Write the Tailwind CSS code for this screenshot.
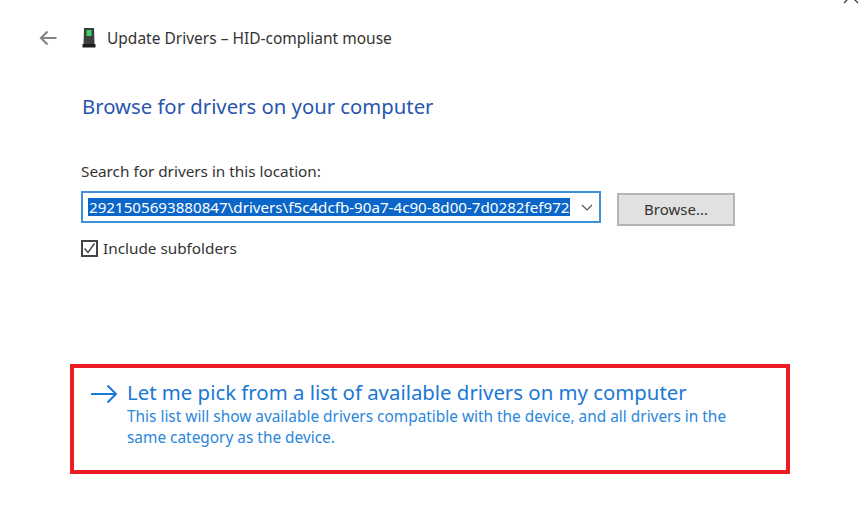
<!DOCTYPE html>
<html>
<head>
<meta charset="utf-8">
<script src="https://cdn.jsdelivr.net/npm/@tailwindcss/browser@4"></script>
</head>
<body class="bg-white">
<div class="relative w-[866px] h-[519px] overflow-hidden bg-white font-['Noto_Sans',sans-serif] antialiased">
  <svg class="absolute left-[843px] top-[-12px] w-[16px] h-[16px]" viewBox="0 0 16 16" fill="none" stroke="#333" stroke-width="1.2"><path d="M1 1l14 14M15 1L1 15"/></svg>

  <div class="flex items-center h-[24px] mt-[26px] ml-[39px]">
    <svg class="w-[18px] h-[16px] text-[#858585]" viewBox="0 0 18 16" fill="none" stroke="currentColor" stroke-width="2.2"><path d="M17.500 8H2M8.500 1.500 2 8l6.500 6.500"/></svg>
    <svg class="w-[14px] h-[20px] ml-[25px]" viewBox="0 0 14 20"><path d="M2 0h10l.5 16h-11z" fill="#3a3f3e"/><rect x="4.500" y="2" width="5" height="6" fill="#3fd06a"/><rect x="0.500" y="16" width="13" height="3.500" fill="#1d1f1f"/></svg>
    <span class="ml-[11px] text-[15.5px] leading-[24px] text-[#333]">Update Drivers – HID-compliant mouse</span>
  </div>

  <h1 class="ml-[82px] mt-[42px] text-[20.3px] leading-[28px] font-normal text-[#2a56ad]">Browse for drivers on your computer</h1>

  <p class="ml-[81px] mt-[41px] text-[15.3px] leading-[20px] text-[#333]">Search for drivers in this location:</p>

  <div class="flex items-start ml-[81px] mt-[10px]">
    <div class="flex items-center w-[520px] h-[32px] border-2 border-[#3d8fd8] bg-white pl-[5px]">
      <span class="h-[18px] w-[482px] pl-[1px] overflow-hidden whitespace-nowrap bg-[#0a66c8] text-white text-[15.16px] leading-[18px]">2921505693880847\drivers\f5c4dcfb-90a7-4c90-8d00-7d0282fef972</span>
      <svg class="w-[12px] h-[7px] ml-[11px]" viewBox="0 0 12 7" fill="none" stroke="#555" stroke-width="1.2"><path d="M1 1l5 5 5-5"/></svg>
    </div>
    <button class="flex items-center justify-center w-[118px] h-[33px] mt-[2px] ml-[16px] border-2 border-[#b5b5b5] bg-[#e1e1e1] text-[15px] text-[#333]">Browse...</button>
  </div>

  <div class="flex items-center ml-[81px] mt-[12px] h-[20px]">
    <span class="flex items-center justify-center w-[17px] h-[17px] border-2 border-[#444] bg-white">
      <svg class="w-[13px] h-[13px]" viewBox="0 0 13 13" fill="none" stroke="#444" stroke-width="1.4"><path d="M1.500 6.500l3.500 4 6.500-9"/></svg>
    </span>
    <span class="ml-[5px] text-[15.3px] leading-[20px] text-[#333]">Include subfolders</span>
  </div>

  <div class="ml-[70px] mt-[106px] w-[720px] h-[110px] border-[4px] border-[#ed1c24] flex items-start pl-[17px] pt-[11px]">
    <svg class="w-[27px] h-[20px] mt-[5px] shrink-0" viewBox="0 0 27 20" fill="none" stroke="#1a78d6" stroke-width="2"><path d="M0 10h25M16.500 1.500 25 10l-8.500 8.500"/></svg>
    <div class="ml-[9px] text-[#1a78d6]">
      <p class="text-[20.36px] leading-[28px] mt-[-1px]">Let me pick from a list of available drivers on my computer</p>
      <p class="text-[15.4px] leading-[21px] w-[610px] mt-[0px] text-[#2a86dc]">This list will show available drivers compatible with the device, and all drivers in the same category as the device.</p>
    </div>
  </div>
</div>
</body>
</html>
